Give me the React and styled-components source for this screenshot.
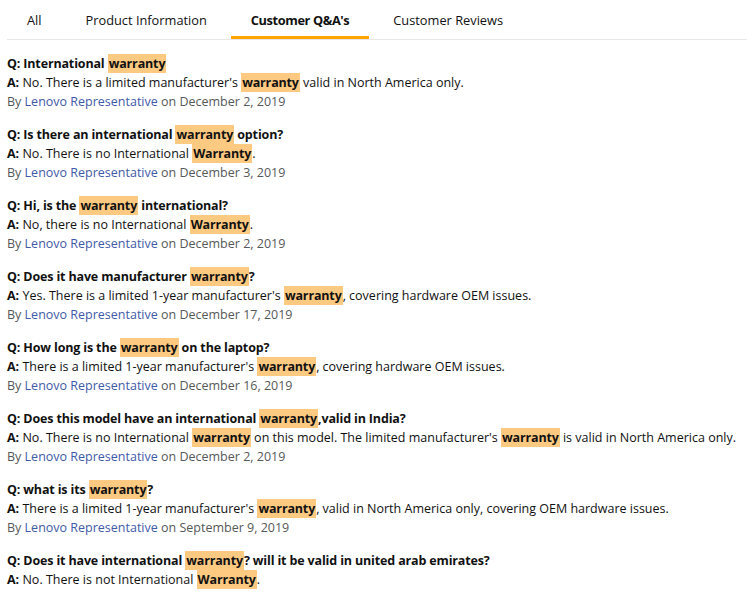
import React from "react";
import styled, { createGlobalStyle } from "styled-components";

const GlobalStyle = createGlobalStyle`
  body {
    margin: 0;
    background: #fff;
    font-family: "Open Sans", "Liberation Sans", Arial, sans-serif;
    color: #111;
  }
`;

const Page = styled.div`
  padding: 0 0 0 7px;
`;

const Tabs = styled.div`
  display: flex;
  gap: 4px;
  border-bottom: 1px solid #e7e7e7;
  height: 39px;
`;

const Tab = styled.div`
  padding: 0 20px;
  display: flex;
  align-items: center;
  font-size: 12.8px;
  color: #111;
  font-weight: ${(p) => (p.active ? 700 : 400)};
  letter-spacing: ${(p) => (p.active ? "-0.4px" : "0")};
  border-bottom: 3px solid ${(p) => (p.active ? "#ffa500" : "transparent")};
  padding-top: 3px;
`;

const List = styled.div`
  padding-top: 14px;
`;

const Item = styled.div`
  font-size: 12.5px;
  line-height: 19px;
  margin-bottom: 14px;
`;

const Question = styled.div`
  font-weight: 700;
  letter-spacing: -0.15px;
  color: #111;
`;

const Answer = styled.div`
  color: #111;
`;

const Label = styled.b``;

const Mark = styled.span`
  background: #fec980;
  font-weight: 700;
  letter-spacing: -0.15px;
  padding: 1px 1px;
`;

const Meta = styled.div`
  color: #565959;
`;

const Link = styled.a`
  color: #3f5aa8;
  text-decoration: none;
`;

const hl = (text) =>
  text.split(/(\[[^\]]+\])/).map((part, i) =>
    part.startsWith("[") ? <Mark key={i}>{part.slice(1, -1)}</Mark> : part
  );

const items = [
  {
    q: "International [warranty]",
    a: "No. There is a limited manufacturer's [warranty] valid in North America only.",
    date: "December 2, 2019",
  },
  {
    q: "Is there an international [warranty] option?",
    a: "No. There is no International [Warranty].",
    date: "December 3, 2019",
  },
  {
    q: "Hi, is the [warranty] international?",
    a: "No, there is no International [Warranty].",
    date: "December 2, 2019",
  },
  {
    q: "Does it have manufacturer [warranty]?",
    a: "Yes. There is a limited 1-year manufacturer's [warranty], covering hardware OEM issues.",
    date: "December 17, 2019",
  },
  {
    q: "How long is the [warranty] on the laptop?",
    a: "There is a limited 1-year manufacturer's [warranty], covering hardware OEM issues.",
    date: "December 16, 2019",
  },
  {
    q: "Does this model have an international [warranty],valid in India?",
    a: "No. There is no International [warranty] on this model. The limited manufacturer's [warranty] is valid in North America only.",
    date: "December 2, 2019",
  },
  {
    q: "what is its [warranty]?",
    a: "There is a limited 1-year manufacturer's [warranty], valid in North America only, covering OEM hardware issues.",
    date: "September 9, 2019",
  },
  {
    q: "Does it have international [warranty]? will it be valid in united arab emirates?",
    a: "No. There is not International [Warranty].",
  },
];

export default function App() {
  return (
    <Page>
      <GlobalStyle />
      <Tabs>
        <Tab>All</Tab>
        <Tab>Product Information</Tab>
        <Tab active>Customer Q&amp;A's</Tab>
        <Tab>Customer Reviews</Tab>
      </Tabs>
      <List>
        {items.map((it, i) => (
          <Item key={i}>
            <Question>Q: {hl(it.q)}</Question>
            <Answer>
              <Label>A:</Label> {hl(it.a)}
            </Answer>
            {it.date && (
              <Meta>
                By <Link href="#">Lenovo Representative</Link> on {it.date}
              </Meta>
            )}
          </Item>
        ))}
      </List>
    </Page>
  );
}
